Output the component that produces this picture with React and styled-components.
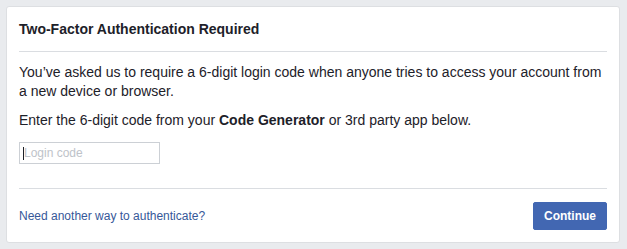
import React from 'react'
import styled, { createGlobalStyle } from 'styled-components'

const GlobalStyle = createGlobalStyle`
  html, body {
    margin: 0;
    padding: 0;
    background: #e9ebee;
    font-family: "Liberation Sans", Arial, Helvetica, sans-serif;
    color: #1d2129;
  }
`

const Page = styled.div`
  padding: 6px 7px 6px 6px;
`

const Card = styled.div`
  background: #fff;
  border: 1px solid #dddfe2;
  border-radius: 3px;
  height: 237px;
  box-sizing: border-box;
  display: flex;
  flex-direction: column;
`

const Header = styled.div`
  margin: 0 12px;
  padding: 13px 0 12px;
  border-bottom: 1px solid #dadde1;
`

const Title = styled.h2`
  margin: 0;
  font-size: 14px;
  line-height: 19px;
  font-weight: bold;
  color: #1d2129;
`

const Body = styled.div`
  margin: 0 12px;
  padding: 11px 0 24px;
  border-bottom: 1px solid #dadde1;
`

const Paragraph = styled.p`
  margin: 0 0 ${p => p.gap || 0}px;
  font-size: 14px;
  line-height: 19px;
  color: #1d2129;
`

const InputWrap = styled.div`
  position: relative;
  width: 141px;
`

const CodeInput = styled.input`
  box-sizing: border-box;
  display: block;
  width: 141px;
  height: 22px;
  border: 1px solid #ccd0d5;
  padding: 0 4px;
  font-family: inherit;
  font-size: 12px;
  outline: none;
  &::placeholder {
    color: #bec3c9;
  }
`

const Caret = styled.span`
  position: absolute;
  left: 4px;
  top: 5px;
  width: 1px;
  height: 13px;
  background: #1d2129;
`

const Footer = styled.div`
  flex: 1;
  margin: 0 12px;
  padding: 12px 0;
  display: flex;
  align-items: center;
  justify-content: space-between;
`

const Link = styled.a`
  font-size: 12px;
  color: #365899;
  text-decoration: none;
  cursor: pointer;
`

const Button = styled.button`
  height: 28px;
  width: 74px;
  padding: 0;
  border: 1px solid #4267b2;
  border-radius: 2px;
  background: #4267b2;
  color: #fff;
  font-family: inherit;
  font-size: 12px;
  font-weight: bold;
  cursor: pointer;
`

export default function App() {
  return (
    <>
      <GlobalStyle />
      <Page>
        <Card>
          <Header>
            <Title>Two-Factor Authentication Required</Title>
          </Header>
          <Body>
            <Paragraph gap={10}>
              You’ve asked us to require a 6-digit login code when anyone tries to access your account from a new device or browser.
            </Paragraph>
            <Paragraph gap={12}>
              Enter the 6-digit code from your <strong>Code Generator</strong> or 3rd party app below.
            </Paragraph>
            <InputWrap>
              <CodeInput type="text" placeholder="Login code" />
              <Caret />
            </InputWrap>
          </Body>
          <Footer>
            <Link>Need another way to authenticate?</Link>
            <Button>Continue</Button>
          </Footer>
        </Card>
      </Page>
    </>
  )
}
